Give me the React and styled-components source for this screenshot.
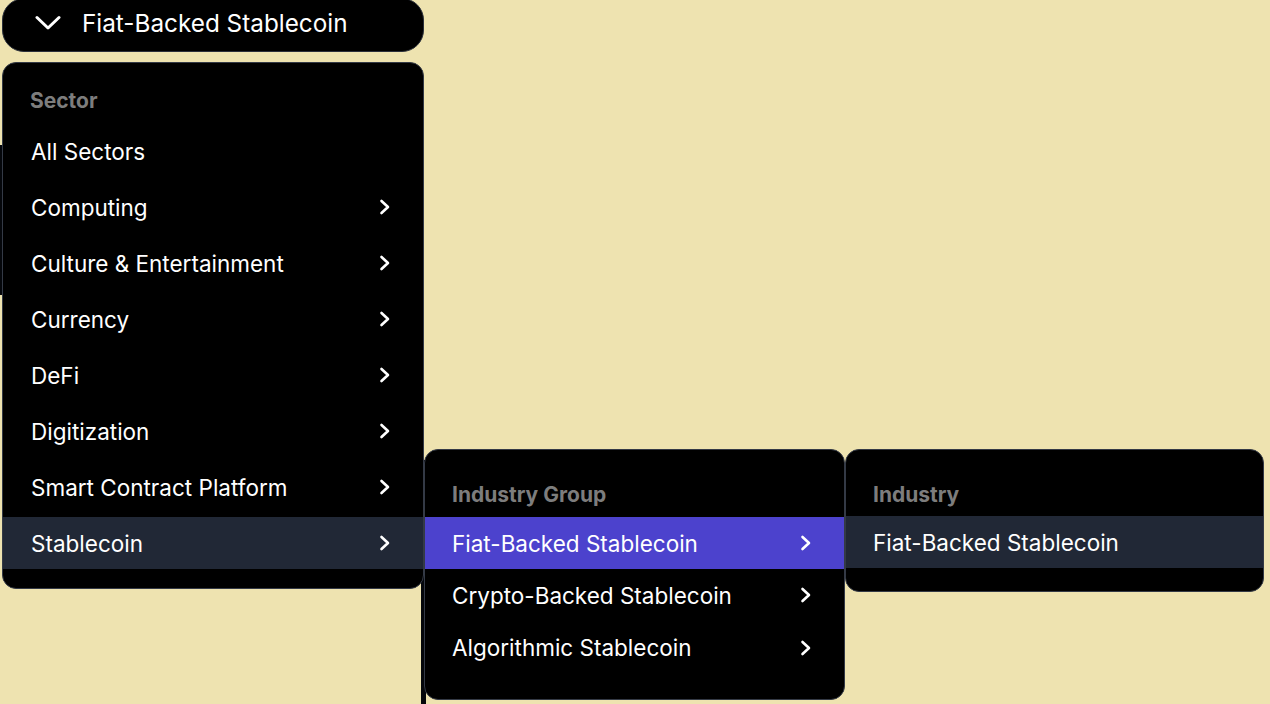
import React from 'react';
import styled, { createGlobalStyle } from 'styled-components';

const GlobalStyle = createGlobalStyle`
  html, body {
    margin: 0;
    padding: 0;
    background: #eee3b0;
    font-family: Inter, "Noto Sans", sans-serif;
    overflow: hidden;
  }
`;

const Stage = styled.div`
  position: relative;
  width: 1270px;
  height: 704px;
`;

const Trigger = styled.button`
  position: absolute;
  left: 2px;
  top: -2px;
  width: 422px;
  height: 54px;
  box-sizing: border-box;
  display: flex;
  align-items: center;
  gap: 21px;
  padding: 0 0 4px 32px;
  background: #000;
  border: 1px solid #2b303b;
  border-radius: 22px;
  color: #fff;
  font-family: inherit;
  font-size: 24.3px;
  font-weight: 400;
`;

const Menu = styled.div`
  position: absolute;
  left: ${(p) => p.$x}px;
  top: ${(p) => p.$y}px;
  width: ${(p) => p.$w}px;
  box-sizing: border-box;
  display: flex;
  flex-direction: column;
  gap: ${(p) => p.$gap || 0}px;
  padding: ${(p) => p.$pt}px 0 ${(p) => p.$pb}px;
  background: #000;
  border: 1px solid #343a46;
  border-radius: 14px;
  overflow: hidden;
`;

const Backdrop = styled.div`
  position: absolute;
  left: ${(p) => p.$x}px;
  top: ${(p) => p.$y}px;
  width: ${(p) => p.$w}px;
  height: ${(p) => p.$h}px;
  background: #05070b;
`;

const Heading = styled.div`
  height: ${(p) => p.$h}px;
  flex: none;
  display: flex;
  align-items: center;
  padding-left: 27px;
  color: #7d7d7d;
  font-size: 21px;
  font-weight: 700;
`;

const Item = styled.div`
  height: ${(p) => p.$h}px;
  flex: none;
  display: flex;
  align-items: center;
  justify-content: space-between;
  padding: 0 32px 0 ${(p) => p.$pl || 27}px;
  color: #fff;
  font-size: 22.5px;
  font-weight: 400;
  background: ${(p) =>
    p.$tone === 'active' ? '#4c42cd' : p.$tone === 'hover' ? '#212836' : 'transparent'};
`;

const Down = () => (
  <svg width="26" height="16" viewBox="0 0 26 16" fill="none">
    <path d="M2 2.5 L13 13 L24 2.5" stroke="#fff" strokeWidth="3" strokeLinecap="round" strokeLinejoin="round" />
  </svg>
);

const Right = () => (
  <svg width="12" height="16" viewBox="0 0 12 16" fill="none">
    <path d="M2.5 2 L9 8 L2.5 14" stroke="#fff" strokeWidth="2.6" strokeLinecap="round" strokeLinejoin="round" />
  </svg>
);

const sectors = [
  ['All Sectors', false],
  ['Computing', true],
  ['Culture & Entertainment', true],
  ['Currency', true],
  ['DeFi', true],
  ['Digitization', true],
  ['Smart Contract Platform', true],
  ['Stablecoin', true, 'hover'],
];

const groups = [
  ['Fiat-Backed Stablecoin', 'active'],
  ['Crypto-Backed Stablecoin'],
  ['Algorithmic Stablecoin'],
];

export default function App() {
  return (
    <Stage>
      <GlobalStyle />
      <Backdrop $x={0} $y={145} $w={3} $h={150} />
      <Backdrop $x={421} $y={460} $w={5} $h={244} />

      <Trigger>
        <Down />
        <span>Fiat-Backed Stablecoin</span>
      </Trigger>

      <Menu $x={2} $y={62} $w={422} $pt={16} $pb={19} $gap={4}>
        <Heading $h={42}>Sector</Heading>
        {sectors.map(([label, more, tone]) => (
          <Item key={label} $h={52} $tone={tone} $pl={28}>
            <span>{label}</span>
            {more && <Right />}
          </Item>
        ))}
      </Menu>

      <Menu $x={424} $y={449} $w={421} $pt={22} $pb={25}>
        <Heading $h={45}>Industry Group</Heading>
        {groups.map(([label, tone]) => (
          <Item key={label} $h={label === 'Algorithmic Stablecoin' ? 53 : 52} $tone={tone}>
            <span>{label}</span>
            <Right />
          </Item>
        ))}
      </Menu>

      <Menu $x={845} $y={449} $w={419} $pt={22} $pb={23}>
        <Heading $h={44}>Industry</Heading>
        <Item $h={52} $tone="hover">
          <span>Fiat-Backed Stablecoin</span>
        </Item>
      </Menu>
    </Stage>
  );
}
